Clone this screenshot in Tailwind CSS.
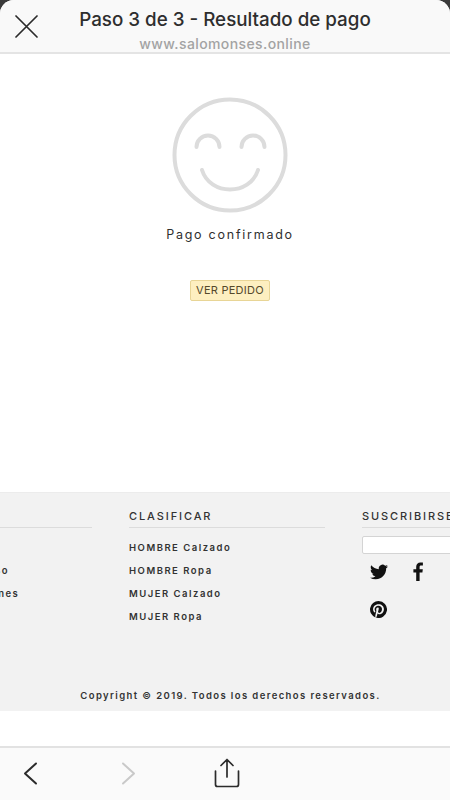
<!doctype html>
<html lang="es">
<head>
<meta charset="utf-8">
<title>Resultado de pago</title>
<script src="https://cdn.jsdelivr.net/npm/@tailwindcss/browser@4"></script>
</head>
<body class="bg-[#3a3a3a]">
<div class="flex h-[800px] w-[450px] flex-col overflow-hidden rounded-t-[14px] bg-white font-['Inter',sans-serif]">

  <!-- cabecera -->
  <header class="relative h-[54px] shrink-0 border-b-2 border-[#e4e4e4] bg-[#f9f9f9] text-center">
    <svg class="absolute left-[15px] top-[15px] h-[23px] w-[23px]" viewBox="0 0 23 23" fill="none" stroke="#2b2b2b" stroke-width="1.7" stroke-linecap="round">
      <path d="M1 1l21 21M22 1L1 22"/>
    </svg>
    <h1 class="pt-[8px] text-[18.8px] font-medium leading-[24px] text-[#2e2e2e]">Paso 3 de 3 - Resultado de pago</h1>
    <p class="pt-[4px] text-[14px] font-medium leading-[16px] tracking-[0.4px] text-[#a3a3a3]">www.salomonses.online</p>
  </header>

  <!-- contenido -->
  <main class="flex h-[438px] shrink-0 flex-col items-center pt-[43px] pl-[10px]">
    <svg class="h-[116px] w-[116px]" viewBox="0 0 116 116" fill="none" stroke="#dcdcdc" stroke-width="4" stroke-linecap="round">
      <circle cx="58" cy="58" r="55.5"/>
      <path d="M24.5 50a11.5 11.5 0 0 1 23 0M69.5 50a11.5 11.5 0 0 1 23 0"/>
      <path d="M30 73c8 26 48 26 56 0"/>
    </svg>
    <p class="mt-[14px] text-[12.5px] font-normal leading-[16px] tracking-[1.75px] text-[#2f2f2f]">Pago confirmado</p>
    <a class="mt-[37px] block h-[21px] rounded-[2px] border border-[#e8d596] bg-[#fdefc0] px-[5px] text-[11px] leading-[19px] tracking-[0.25px] text-[#54492b]">VER PEDIDO</a>
  </main>

  <!-- pie -->
  <footer class="h-[219px] shrink-0 overflow-hidden border-t border-[#ececec] bg-[#f2f2f2]">
    <div class="ml-[-104px] flex h-[196px] w-[600px] gap-[37px] pt-[16px] text-[9.5px] font-semibold tracking-[1.5px] text-[#333]">
      <div class="w-[196px] shrink-0">
        <h4 class="h-[19px] border-b border-[#dcdcdc]"></h4>
        <ul class="mt-[13px] flex flex-col gap-[8.5px] leading-[14.5px]">
          <li>&nbsp;</li>
          <li>Términos del aviso</li>
          <li>Pagos y condiciones</li>
        </ul>
      </div>
      <div class="w-[196px] shrink-0">
        <h4 class="h-[19px] border-b border-[#dcdcdc] text-[11px] font-medium leading-[14px] tracking-[1.9px]">CLASIFICAR</h4>
        <ul class="mt-[13px] flex flex-col gap-[8.5px] leading-[14.5px]">
          <li>HOMBRE Calzado</li>
          <li>HOMBRE Ropa</li>
          <li>MUJER Calzado</li>
          <li>MUJER Ropa</li>
        </ul>
      </div>
      <div class="w-[196px] shrink-0">
        <h4 class="h-[19px] border-b border-[#dcdcdc] text-[11px] font-medium leading-[14px] tracking-[1.9px]">SUSCRIBIRSE</h4>
        <div class="mt-[8px] h-[18px] rounded-[2px] border border-[#d4d4d4] bg-white"></div>
        <div class="mt-[8px] flex items-center gap-[25px] pl-[8px]">
          <svg class="h-[18px] w-[18px]" viewBox="0 0 24 24" fill="#111"><path d="M23.95 4.57a10 10 0 0 1-2.82.77 4.96 4.96 0 0 0 2.16-2.72c-.95.55-2 .96-3.13 1.19a4.92 4.92 0 0 0-8.38 4.48C7.69 8.1 4.07 6.13 1.64 3.16a4.82 4.82 0 0 0-.67 2.48c0 1.71.87 3.21 2.19 4.1a4.9 4.9 0 0 1-2.23-.62v.06a4.92 4.92 0 0 0 3.95 4.83 5 5 0 0 1-2.21.08 4.94 4.94 0 0 0 4.6 3.42A9.87 9.87 0 0 1 0 19.54a14 14 0 0 0 7.56 2.21c9.05 0 14-7.5 14-13.98 0-.21 0-.42-.02-.63a9.94 9.94 0 0 0 2.46-2.55z"/></svg>
          <svg class="h-[19px] w-[11px]" viewBox="0 0 11 19" fill="#111"><path d="M3.2 19v-8.5H.4V7.2h2.8V4.8C3.2 2 4.9.4 7.4.4c1.2 0 2.2.1 2.5.1v2.9H8.2c-1.4 0-1.6.6-1.6 1.6v2.2h3.2l-.4 3.3H6.6V19z"/></svg>
        </div>
        <svg class="mt-[20px] ml-[8px] h-[17px] w-[17px]" viewBox="0 0 24 24" fill="#111"><path d="M12 0a12 12 0 0 0-4.37 23.17c-.1-.95-.2-2.4.04-3.44l1.4-5.96s-.35-.72-.35-1.78c0-1.66.96-2.9 2.16-2.9 1.02 0 1.51.77 1.51 1.69 0 1.03-.65 2.56-.99 3.99-.28 1.19.6 2.16 1.78 2.16 2.13 0 3.77-2.25 3.77-5.49 0-2.87-2.06-4.88-5.01-4.88-3.41 0-5.42 2.56-5.42 5.2 0 1.03.4 2.13.9 2.73.1.12.11.22.08.34l-.33 1.36c-.05.22-.18.27-.41.16-1.5-.7-2.43-2.89-2.43-4.65 0-3.78 2.75-7.26 7.92-7.26 4.16 0 7.39 2.97 7.39 6.93 0 4.14-2.61 7.46-6.23 7.46-1.21 0-2.36-.63-2.75-1.38l-.75 2.85c-.27 1.04-1 2.35-1.49 3.15A12 12 0 1 0 12 0z"/></svg>
      </div>
    </div>
    <p class="pl-[11px] text-center text-[9.5px] font-semibold leading-[14px] tracking-[1.4px] text-[#333]">Copyright © 2019. Todos los derechos reservados.</p>
  </footer>

  <div class="h-[35px] shrink-0 bg-white"></div>

  <!-- barra inferior -->
  <nav class="flex h-[54px] shrink-0 items-start border-t-2 border-[#e2e2e2] bg-[#fafafa]">
    <svg class="ml-[23px] mt-[14px] h-[23px] w-[15px]" viewBox="0 0 15 23" fill="none" stroke="#2b2b2b" stroke-width="2" stroke-linecap="round" stroke-linejoin="round"><path d="M13 1.5L2 11.5l11 10"/></svg>
    <svg class="ml-[83px] mt-[14px] h-[23px] w-[15px]" viewBox="0 0 15 23" fill="none" stroke="#c9c9c9" stroke-width="2" stroke-linecap="round" stroke-linejoin="round"><path d="M2 1.5l11 10-11 10"/></svg>
    <svg class="ml-[78px] mt-[10px] h-[30px] w-[26px]" viewBox="0 0 26 30" fill="none" stroke="#2b2b2b" stroke-width="1.7" stroke-linecap="round" stroke-linejoin="round"><path d="M13 19V1.5M7 7.5l6-6 6 6M1.5 13v13.5a2 2 0 0 0 2 2h19a2 2 0 0 0 2-2V13"/></svg>
  </nav>
</div>
</body>
</html>
